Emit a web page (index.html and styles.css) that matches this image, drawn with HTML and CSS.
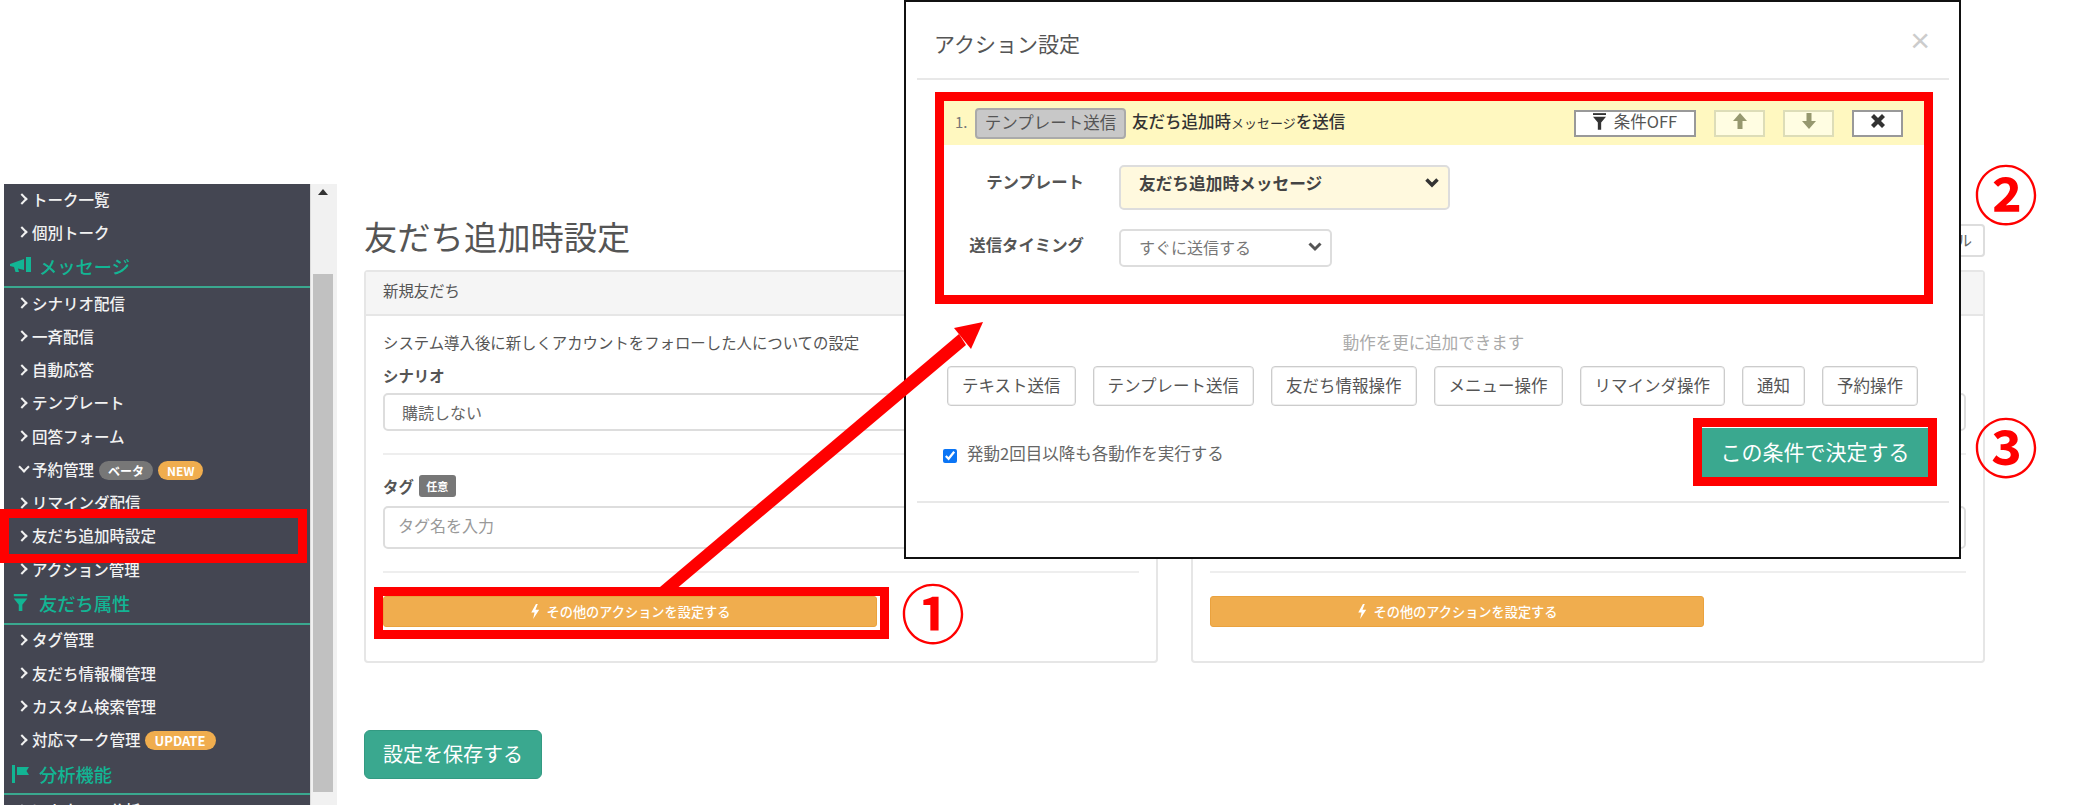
FILE: index.html
```html
<!DOCTYPE html>
<html lang="ja">
<head>
<meta charset="utf-8">
<title>友だち追加時設定</title>
<link rel="stylesheet" href="styles.css">
</head>
<body>
<div class="stage">
  <div class="page">
    <aside class="side">
      <nav class="nav">
        <a class="item">トーク一覧</a>
        <a class="item">個別トーク</a>
        <div class="head"><svg class="head-icon" viewBox="0 0 22 18"><path d="M0 7 L14 2 V13 L8 11.5 L9 15 L5.5 15 L4 10 L0 9 Z"/><rect x="16" y="0" width="5" height="15"/></svg>メッセージ</div>
        <a class="item">シナリオ配信</a>
        <a class="item">一斉配信</a>
        <a class="item">自動応答</a>
        <a class="item">テンプレート</a>
        <a class="item">回答フォーム</a>
        <a class="item open">予約管理<span class="pill pill-gray">ベータ</span><span class="pill pill-orange">NEW</span></a>
        <a class="item">リマインダ配信</a>
        <a class="item">友だち追加時設定</a>
        <a class="item">アクション管理</a>
        <div class="head"><svg class="head-icon" viewBox="0 0 22 20"><rect x="3" y="0" width="15" height="2.5"/><path d="M3 5 H18 L12.5 12 V19 H8.5 V12 Z"/></svg>友だち属性</div>
        <a class="item">タグ管理</a>
        <a class="item">友だち情報欄管理</a>
        <a class="item">カスタム検索管理</a>
        <a class="item">対応マーク管理<span class="pill pill-orange pill-update">UPDATE</span></a>
        <div class="head"><svg class="head-icon" viewBox="0 0 22 18"><rect x="2" y="0" width="3" height="18"/><path d="M7 2 H19 L16.5 6 L19 10 H7 Z"/></svg>分析機能</div>
        <a class="item">アカウント分析</a>
      </nav>
      <div class="scrollbar">
        <span class="scroll-up"></span>
        <span class="scroll-thumb"></span>
      </div>
    </aside>
    <main class="main">
      <div class="title-row">
        <h1 class="title">友だち追加時設定</h1>
        <button class="manual">マニュアル</button>
      </div>
      <div class="cards">
        <section class="card">
          <header class="card-head">新規友だち</header>
          <div class="card-body">
            <p class="desc">システム導入後に新しくアカウントをフォローした人についての設定</p>
            <div class="label">シナリオ</div>
            <div class="input input-select">購読しない</div>
            <hr class="rule rule-a">
            <div class="label">タグ<span class="opt">任意</span></div>
            <div class="input input-text">タグ名を入力</div>
            <hr class="rule rule-b">
            <button class="other"><svg class="bolt" viewBox="0 0 10 16"><path d="M6 0 L1 9 H4.5 L3 16 L9.5 6 H5.5 L8 0 Z"/></svg>その他のアクションを設定する</button>
          </div>
        </section>
        <section class="card">
          <header class="card-head">既存友だち</header>
          <div class="card-body">
            <p class="desc">システム導入前からフォローしている人についての設定</p>
            <div class="label">シナリオ</div>
            <div class="input input-select">購読しない</div>
            <hr class="rule rule-a">
            <div class="label">タグ<span class="opt">任意</span></div>
            <div class="input input-text">タグ名を入力</div>
            <hr class="rule rule-b">
            <button class="other"><svg class="bolt" viewBox="0 0 10 16"><path d="M6 0 L1 9 H4.5 L3 16 L9.5 6 H5.5 L8 0 Z"/></svg>その他のアクションを設定する</button>
          </div>
        </section>
      </div>
      <button class="save">設定を保存する</button>
    </main>
  </div>

  <div class="modal">
    <header class="modal-head">
      <span class="modal-title">アクション設定</span>
      <span class="modal-close">×</span>
    </header>
    <div class="modal-body">
      <div class="action">
        <div class="action-bar">
          <span class="num">1.</span>
          <span class="kind">テンプレート送信</span>
          <span class="action-name">友だち追加時<small>メッセージ</small>を送信</span>
          <span class="tools">
            <button class="tool tool-cond"><svg class="tool-filter" viewBox="0 0 14 18"><rect x="0" y="0" width="14" height="2"/><path d="M0 4 H14 L8.8 10 V18 H5.2 V10 Z"/></svg>条件OFF</button>
            <button class="tool tool-off"><svg class="tool-arrow" viewBox="0 0 14 16"><path d="M7 0 L14 8 H9.5 V16 H4.5 V8 H0 Z"/></svg></button>
            <button class="tool tool-off"><svg class="tool-arrow" viewBox="0 0 14 16"><path d="M7 16 L0 8 H4.5 V0 H9.5 V8 H14 Z"/></svg></button>
            <button class="tool"><svg class="tool-x" viewBox="0 0 14 14"><path d="M3 0 L7 4 L11 0 L14 3 L10 7 L14 11 L11 14 L7 10 L3 14 L0 11 L4 7 L0 3 Z"/></svg></button>
          </span>
        </div>
        <div class="field field-template">
          <span class="field-label">テンプレート</span>
          <div class="pick pick-template">友だち追加時メッセージ<svg class="chev" viewBox="0 0 14 10"><path d="M1.5 1.5 L7 7 L12.5 1.5"/></svg></div>
        </div>
        <div class="field field-timing">
          <span class="field-label">送信タイミング</span>
          <div class="pick pick-timing">すぐに送信する<svg class="chev" viewBox="0 0 14 10"><path d="M1.5 1.5 L7 7 L12.5 1.5"/></svg></div>
        </div>
      </div>
      <p class="note">動作を更に追加できます</p>
      <div class="adds">
        <button class="add">テキスト送信</button>
        <button class="add">テンプレート送信</button>
        <button class="add">友だち情報操作</button>
        <button class="add">メニュー操作</button>
        <button class="add">リマインダ操作</button>
        <button class="add">通知</button>
        <button class="add">予約操作</button>
      </div>
      <div class="confirm-row">
        <label class="check"><input type="checkbox" checked>発動2回目以降も各動作を実行する</label>
        <button class="confirm">この条件で決定する</button>
      </div>
    </div>
    <div class="modal-foot"></div>
  </div>

  <div class="frame frame-nav"></div>
  <div class="frame frame-other"></div>
  <div class="frame frame-action"></div>
  <div class="frame frame-confirm"></div>
  <svg class="pointer" viewBox="0 0 2080 805">
    <path d="M660 587 L675 590 L966 345 L959 334 Z"/>
    <path d="M983 322 L954 328 L971 349 Z"/>
  </svg>
  <span class="mark mark-1">①</span>
  <span class="mark mark-2">②</span>
  <span class="mark mark-3">③</span>
</div>
</body>
</html>
```
FILE: styles.css
```css
* { box-sizing: border-box; }
html, body { margin: 0; padding: 0; background: #fff; }
body { font-family: "Noto Sans CJK JP", "Liberation Sans", sans-serif; color: #555; }
button { font-family: inherit; cursor: pointer; }
.stage { position: relative; width: 2080px; height: 805px; overflow: hidden; }
.page { display: flex; align-items: flex-start; padding: 184px 0 0 4px; height: 805px; }

/* sidebar */
.side { display: flex; width: 333px; height: 621px; flex: none; }
.nav { width: 306px; background: #444652; overflow: hidden; flex: none; }
.item { display: flex; align-items: center; height: 33.25px; padding: 0 0 4px 28px; font-size: 15.5px; font-weight: 500; color: #f2f2f2; position: relative; white-space: nowrap; }
.item::before { content: ""; position: absolute; left: 14px; top: 11px; width: 6px; height: 6px; border-top: 2px solid #f2f2f2; border-right: 2px solid #f2f2f2; transform: rotate(45deg); }
.item.open::before { left: 16px; top: 9px; transform: rotate(135deg); }
.head { display: flex; align-items: center; height: 37.5px; border-bottom: 2px solid #3aa88f; padding: 0 0 4px 6px; font-size: 18.3px; color: #12b594; font-weight: 500; }
.head-icon { width: 22px; height: 18px; fill: #12b594; margin-right: 7px; }
.pill { display: inline-flex; align-items: center; justify-content: center; height: 19px; border-radius: 10px; color: #fff; font-size: 12px; font-weight: 700; margin: 3px 0 0 5px; padding: 0 9px; }
.pill-gray { background: #777; }
.pill-orange { background: #f0ad4e; }
.pill-update { margin-left: 4px; padding: 0 10px; font-size: 13px; }
.scrollbar { position: relative; width: 27px; background: #f1f1f1; border-left: 1px solid #ddd; }
.scroll-up { position: absolute; left: 7px; top: 5px; border-left: 5px solid transparent; border-right: 5px solid transparent; border-bottom: 6px solid #333; }
.scroll-thumb { position: absolute; left: 2px; top: 90px; width: 20px; height: 518px; background: #c1c1c1; }

/* main */
.main { margin-left: 27px; width: 1621px; flex: none; margin-top: 33px; }
.title-row { display: flex; justify-content: space-between; align-items: center; height: 40px; margin-bottom: 13px; }
.title { margin: 0; padding-bottom: 2px; font-size: 33.3px; font-weight: 400; line-height: 38px; color: #555; }
.manual { height: 33px; margin-top: 7px; padding: 0 11px 2px; background: #fff; border: 2px solid #ddd; border-radius: 4px; font-size: 15px; color: #666; }
.cards { display: grid; grid-template-columns: 794px 794px; gap: 33px; }
.card { height: 393px; border: 2px solid #e6e6e6; border-radius: 4px; }
.card-head { height: 44px; background: #f5f5f5; border-bottom: 2px solid #e6e6e6; font-size: 15.4px; line-height: 36px; padding-left: 17px; color: #555; }
.card-body { padding: 15px 17px 0; }
.desc { margin: 0; font-size: 15.4px; line-height: 22px; }
.label { display: flex; align-items: center; font-size: 15.4px; line-height: 22px; font-weight: 700; margin-top: 11px; color: #555; }
.opt { display: inline-flex; align-items: center; justify-content: center; width: 37px; height: 22px; background: #777; color: #fff; font-size: 11px; border-radius: 3px; margin-left: 5px; }
.input { border: 2px solid #ddd; border-radius: 5px; font-size: 16px; display: flex; align-items: center; padding-left: 17px; margin-top: 7px; }
.input-select { height: 38px; color: #666; }
.input-text { height: 43px; color: #999; padding: 0 0 6px 13px; margin-top: 9px; }
.rule { border: 0; border-top: 2px solid #eee; margin: 0; }
.rule-a { margin-top: 22px; margin-bottom: 20px; }
.rule-b { margin-top: 22px; margin-bottom: 23px; }
.other { display: flex; align-items: center; justify-content: center; width: 494px; height: 31px; background: #f0ad4e; border: 1px solid #eaa23e; border-radius: 3px; color: #fff; font-size: 13.2px; font-weight: 500; padding: 0; }
.bolt { width: 10px; height: 15px; fill: #fff; margin-right: 7px; }
.save { display: block; margin-top: 67px; width: 178px; height: 49px; background: #3aa88f; border: 1px solid #339a82; border-radius: 6px; color: #fff; font-size: 20px; padding: 0 0 2px; }

/* modal */
.modal { position: absolute; left: 904px; top: 0; width: 1057px; height: 559px; background: #fff; border: 2px solid #111; }
.modal-head { display: flex; justify-content: space-between; align-items: center; height: 78px; margin: 0 10px 0 11px; border-bottom: 2px solid #e8e8e8; padding: 0 19px 0 17px; }
.modal-title { font-size: 21px; color: #555; padding-top: 5px; }
.modal-close { font-size: 34px; line-height: 1; color: #ccc; font-family: "Liberation Sans", sans-serif; font-weight: 400; }
.modal-body { padding: 21px 31px 0 38px; }
.action { margin-right: 4px; }
.action-bar { display: flex; align-items: center; height: 44px; background: #fff8c0; padding-left: 11px; white-space: nowrap; }
.num { color: #777; font-size: 15px; width: 20px; flex: none; padding-bottom: 3px; }
.kind { display: flex; align-items: center; justify-content: center; width: 151px; height: 31px; padding-bottom: 3px; background: #c8c8c8; border: 2px solid #aaa; border-radius: 4px; font-size: 16.5px; color: #555; flex: none; }
.action-name { margin-left: 6px; padding-bottom: 4px; font-size: 16.5px; color: #333; font-weight: 500; }
.action-name small { font-size: 13px; font-weight: 400; }
.tools { display: flex; gap: 18px; margin-left: auto; margin-right: 21px; }
.tool { display: flex; align-items: center; justify-content: center; width: 51px; height: 27px; background: #fff; border: 2px solid #999; padding: 0 0 4px; font-size: 16.5px; color: #555; }
.tool-cond { width: 122px; }
.tool-off { background: #fffde2; border-color: #ddddb8; }
.tool-filter { width: 13px; height: 17px; fill: #333; margin-right: 8px; }
.tool-arrow { width: 14px; height: 16px; fill: #96986f; }
.tool-x { width: 14px; height: 14px; fill: #333; }
.field { display: grid; grid-template-columns: 140px auto; column-gap: 35px; align-items: center; justify-content: start; margin-top: 19px; }
.field-template { margin-top: 20px; }
.field-label { text-align: right; font-size: 16.4px; font-weight: 700; color: #555; }
.field-template .field-label { padding-bottom: 14px; }
.field-timing .field-label { padding-bottom: 8px; }
.pick { display: flex; align-items: center; border: 2px solid #ddd; border-radius: 5px; padding-left: 18px; position: relative; }
.pick-template { width: 331px; height: 45px; padding-bottom: 10px; background: #fff9de; font-size: 16.7px; font-weight: 700; color: #444; }
.pick-timing { width: 213px; height: 38px; padding-bottom: 3px; background: #fff; font-size: 16px; color: #777; }
.chev { position: absolute; right: 9px; top: 50%; width: 14px; height: 10px; margin-top: -10px; fill: none; stroke: #333; stroke-width: 3.5; }
.pick-timing .chev { stroke: #555; stroke-width: 3; right: 8px; margin-top: -6px; }
.note { margin: 64px 0 0; padding-right: 5px; text-align: center; font-size: 16.5px; line-height: 22px; color: #aaa; }
.adds { display: flex; gap: 17px; margin: 13px 0 0 3px; }
.add { height: 40px; padding: 0 14px 3px; background: #fff; border: 1px solid #ccc; box-shadow: 0 0 0 1px #eee inset; border-radius: 4px; font-size: 16.5px; color: #555; white-space: nowrap; }
.confirm-row { display: flex; justify-content: space-between; align-items: center; margin-top: 22px; }
.check { display: inline-flex; align-items: center; gap: 10px; font-size: 16.5px; color: #666; margin-left: -1px; }
.check input { width: 14px; height: 14px; margin: 6px 0 0; accent-color: #0b75f5; }
.confirm { width: 226px; height: 49px; background: #3aa88f; border: 0; color: #fff; font-size: 21px; padding: 0 0 3px; }
.modal-foot { height: 2px; background: #e8e8e8; margin: 24px 10px 0 11px; }

/* annotations */
.frame { position: absolute; border: 9px solid #f00; }
.frame-nav { left: 0; top: 509px; width: 307px; height: 54px; }
.frame-other { left: 374px; top: 587px; width: 515px; height: 52px; }
.frame-action { left: 935px; top: 92px; width: 998px; height: 212px; }
.frame-confirm { left: 1693px; top: 418px; width: 244px; height: 68px; }
.pointer { position: absolute; left: 0; top: 0; width: 2080px; height: 805px; fill: #f00; }
.mark { position: absolute; font-size: 64px; line-height: 1; font-weight: 700; color: #f00; transform: translate(-50%, -50%); }
.mark-1 { left: 933px; top: 610px; }
.mark-2 { left: 2006px; top: 191px; }
.mark-3 { left: 2006px; top: 444px; }
```
